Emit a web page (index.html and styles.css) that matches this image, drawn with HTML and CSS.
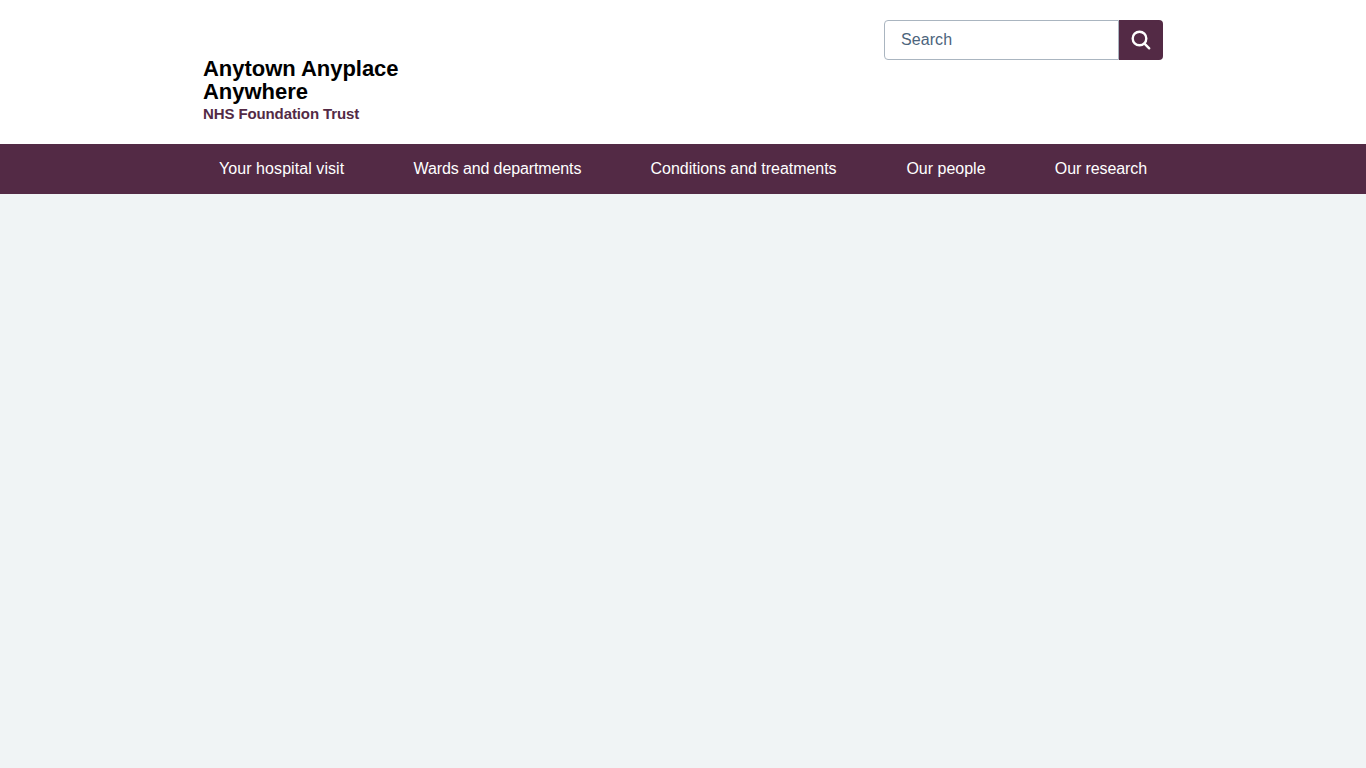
FILE: index.html
```html
<!DOCTYPE html>
<html lang="en">
<head>
<meta charset="utf-8">
<title>Anytown Anyplace Anywhere</title>
<link rel="stylesheet" href="styles.css">
</head>
<body>
<header class="header">
  <div class="container">
    <a class="logo" href="#">
      <span class="name">Anytown Anyplace<br>Anywhere</span>
      <span class="descriptor">NHS Foundation Trust</span>
    </a>
    <form class="search">
      <input class="search-input" type="search" placeholder="Search" aria-label="Search">
      <button class="search-submit" type="button" aria-label="Search">
        <svg class="icon" viewBox="0 0 27 27" aria-hidden="true"><circle cx="11.5" cy="11.5" r="6.8"/><path d="M16.5 16.6l4.7 4.7"/></svg>
      </button>
    </form>
  </div>
</header>
<nav class="nav">
  <ul class="nav-list">
    <li><a class="nav-link nav-link-visit" href="#">Your hospital visit</a></li>
    <li><a class="nav-link nav-link-wards" href="#">Wards and departments</a></li>
    <li><a class="nav-link nav-link-conditions" href="#">Conditions and treatments</a></li>
    <li><a class="nav-link nav-link-people" href="#">Our people</a></li>
    <li><a class="nav-link nav-link-research" href="#">Our research</a></li>
  </ul>
</nav>
</body>
</html>
```
FILE: styles.css
```css
* { box-sizing: border-box; }
body {
  margin: 0;
  background: #f0f4f5;
  font-family: "Liberation Sans", Arial, sans-serif;
}
.header { background: #fff; height: 144px; padding: 20px 0; }
.container {
  display: flex;
  justify-content: space-between;
  align-items: flex-start;
  width: 960px;
  margin: 0 auto;
}
.logo { display: block; padding-top: 37px; text-decoration: none; }
.name {
  display: block;
  color: #000;
  font-size: 22px;
  font-weight: 700;
  line-height: 23px;
  letter-spacing: -0.03px;
}
.descriptor {
  display: block;
  margin-top: 2px;
  color: #532a45;
  font-size: 15px;
  font-weight: 700;
  line-height: 18px;
  letter-spacing: -0.11px;
}
.search { display: flex; }
.search-input {
  width: 235px;
  height: 40px;
  margin: 0;
  padding: 0 16px;
  border: 1px solid #aab5c0;
  border-radius: 4px 0 0 4px;
  background: #fff;
  font: 16px "Liberation Sans", Arial, sans-serif;
  letter-spacing: 0.08px;
  appearance: none;
}
.search-input::placeholder { color: #4c647c; opacity: 1; }
.search-submit {
  display: flex;
  align-items: center;
  justify-content: center;
  width: 44px;
  height: 40px;
  padding: 0;
  border: 0;
  border-radius: 0 4px 4px 0;
  background: #532a45;
}
.icon {
  width: 27px;
  height: 27px;
  fill: none;
  stroke: #fff;
  stroke-width: 2.4;
  stroke-linecap: round;
}
.nav { height: 50px; background: #532a45; }
.nav-list {
  display: flex;
  justify-content: space-between;
  width: 960px;
  margin: 0 auto;
  padding: 0 16px;
  list-style: none;
}
.nav-link {
  display: block;
  color: #fff;
  font-size: 16px;
  line-height: 50px;
  text-decoration: none;
}
.nav-link-visit { letter-spacing: 0.07px; }
.nav-link-wards { letter-spacing: -0.11px; }
.nav-link-conditions { letter-spacing: -0.03px; }
.nav-link-people { margin-left: 0.6px; }
.nav-link-research { letter-spacing: -0.1px; }
```
